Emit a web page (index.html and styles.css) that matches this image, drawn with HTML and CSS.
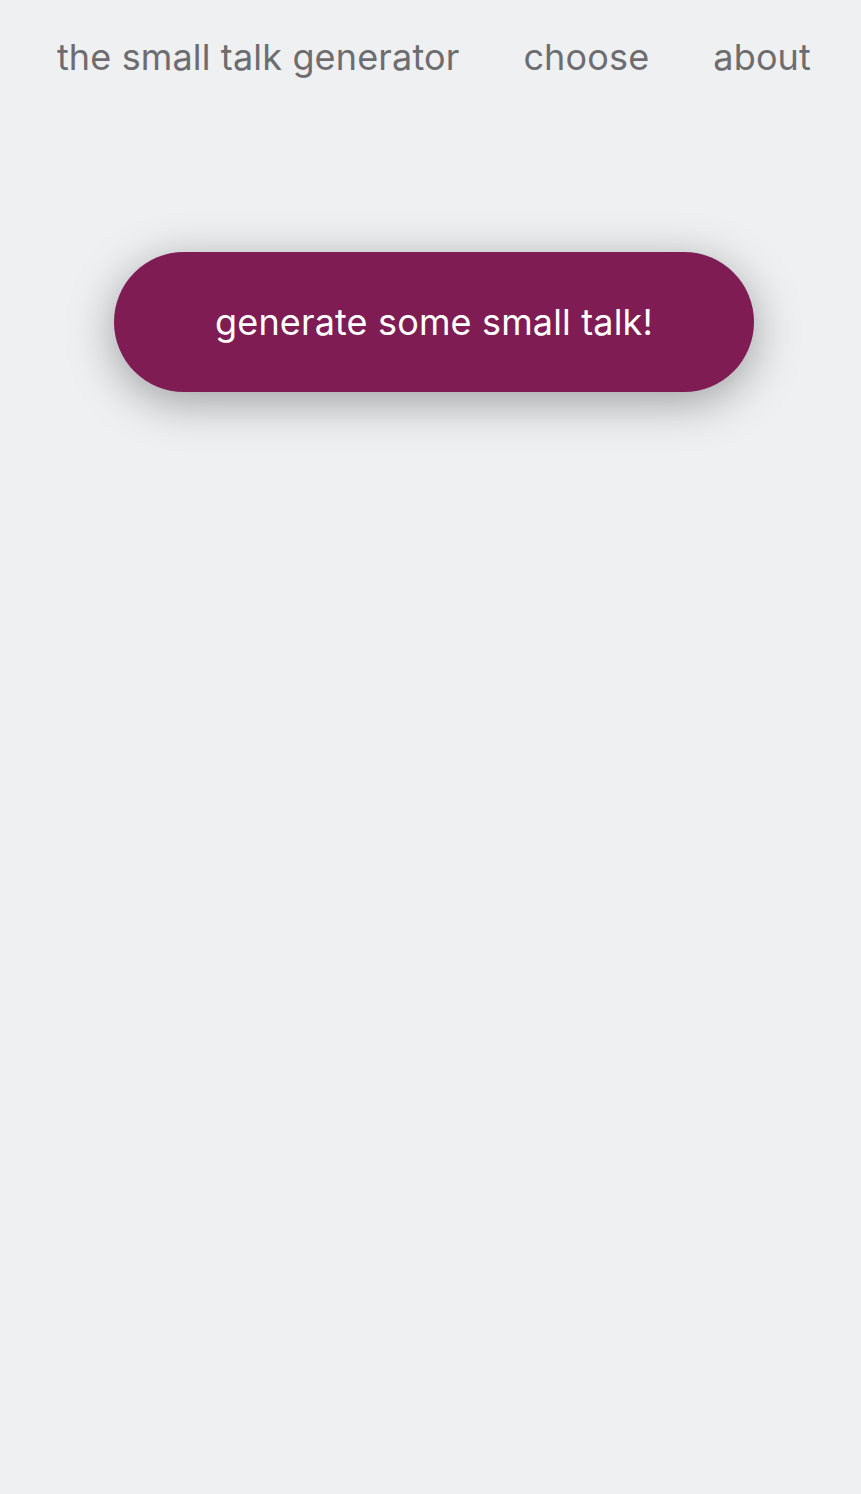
FILE: index.html
```html
<!DOCTYPE html>
<html lang="en">
<head>
<meta charset="utf-8">
<title>the small talk generator</title>
<link rel="stylesheet" href="styles.css">
</head>
<body>
<nav class="nav">
  <a class="nav-link" href="#">the small talk generator</a>
  <a class="nav-link" href="#">choose</a>
  <a class="nav-link" href="#">about</a>
</nav>
<main class="main">
  <button class="generate" type="button">generate some small talk!</button>
</main>
</body>
</html>
```
FILE: styles.css
```css
html, body {
  margin: 0;
  padding: 0;
  background: #eff0f2;
}
body {
  min-height: 100vh;
  font-family: Inter, Roboto, "Noto Sans", sans-serif;
}
.nav {
  display: flex;
  justify-content: flex-end;
  align-items: center;
  gap: 64px;
  padding: 31px 50px 0 56px;
  height: 52px;
}
.nav-link {
  color: #6d6d70;
  font-size: 36px;
  font-weight: 400;
  text-decoration: none;
  letter-spacing: 0.15px;
  line-height: 52px;
  white-space: nowrap;
}
.main {
  display: flex;
  justify-content: center;
  padding: 169px 0 120px 7px;
}
.generate {
  width: 640px;
  height: 140px;
  border: none;
  border-radius: 70px;
  background: #7e1c53;
  color: #ffffff;
  font-family: Inter, Roboto, "Noto Sans", sans-serif;
  font-size: 36px;
  font-weight: 400;
  letter-spacing: 0.15px;
  box-shadow: 0 10px 46px rgba(0, 0, 0, 0.34);
  cursor: pointer;
}
```
